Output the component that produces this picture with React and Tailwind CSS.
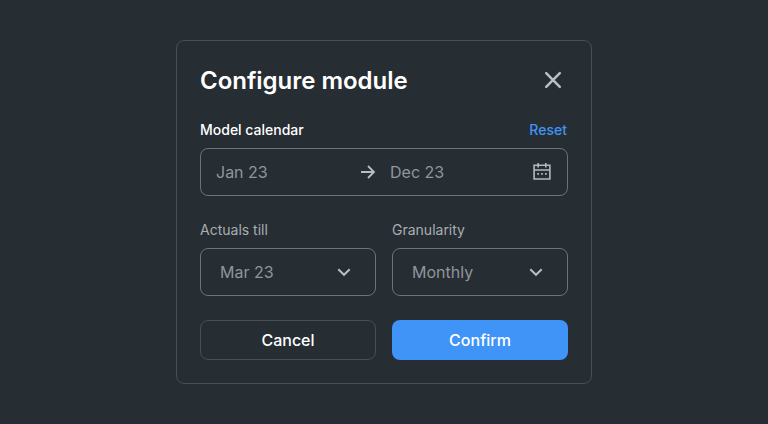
const line = { fill: "none", stroke: "currentColor" };

function Chevron() {
  return (
    <svg width="24" height="24" viewBox="0 0 24 24" {...line} strokeWidth="2" className="text-[#b9bec3]">
      <path d="m6.300 9.200 5.700 5.600 5.700-5.600" />
    </svg>
  );
}

function Select({ label, value }) {
  return (
    <div className="w-44">
      <div className="h-5 text-sm leading-5 text-[#a8adb2]">{label}</div>
      <button className="mt-2 flex h-12 w-full items-center justify-between rounded-lg border border-[#6b7378] px-[19px] text-base text-[#8f969c]">
        <span>{value}</span>
        <Chevron />
      </button>
    </div>
  );
}

export default function App() {
  return (
    <main className="flex h-[424px] w-[768px] items-center justify-center bg-[#262d33] font-['Inter',sans-serif]">
      <section className="h-[344px] w-[416px] rounded-lg border border-[#485056] px-[23px] pt-[23px]">
        <header className="flex h-8 items-center justify-between">
          <h1 className="relative top-px text-2xl leading-8 font-semibold tracking-[-0.03px] text-white">Configure module</h1>
          <svg width="30" height="30" viewBox="0 0 30 30" {...line} strokeWidth="2.500" strokeLinecap="round" className="text-[#bcc0c5]">
            <path d="m8.200 8.200 13.600 13.600M21.800 8.200 8.200 21.800" />
          </svg>
        </header>
        <div className="mt-6 flex h-5 justify-between text-sm leading-5 font-medium">
          <span className="text-white">Model calendar</span>
          <button className="mr-px text-[#4094f7]">Reset</button>
        </div>
        <div className="mt-2 flex h-12 items-center rounded-lg border border-[#6b7378] px-[15px] text-base text-[#8f969c]">
          <span className="w-[140px]">Jan 23</span>
          <svg width="24" height="24" viewBox="0 0 24 24" {...line} strokeWidth="1.800" className="text-[#b9bec3]">
            <path d="M5 12h12.500M12 6l6 6-6 6" />
          </svg>
          <span className="ml-2.5 flex-1">Dec 23</span>
          <svg width="20" height="20" viewBox="0 0 20 20" {...line} strokeWidth="1.600" className="text-[#b4b9be]">
            <path d="M2.100 3.300h15.800v13.700H2.100zM2.100 8h15.800M6.200 1v4.500M13.800 1v4.500" />
            <path d="M5.300 11.900h1.700M9.150 11.900h1.700M13 11.900h1.700" />
          </svg>
        </div>
        <div className="mt-6 flex gap-4">
          <Select label="Actuals till" value="Mar 23" />
          <Select label="Granularity" value="Monthly" />
        </div>
        <div className="mt-6 flex gap-4 text-base font-medium text-white">
          <button className="h-10 w-44 rounded-lg border border-[#485056]">Cancel</button>
          <button className="h-10 w-44 rounded-lg bg-[#4094f7]">Confirm</button>
        </div>
      </section>
    </main>
  );
}
